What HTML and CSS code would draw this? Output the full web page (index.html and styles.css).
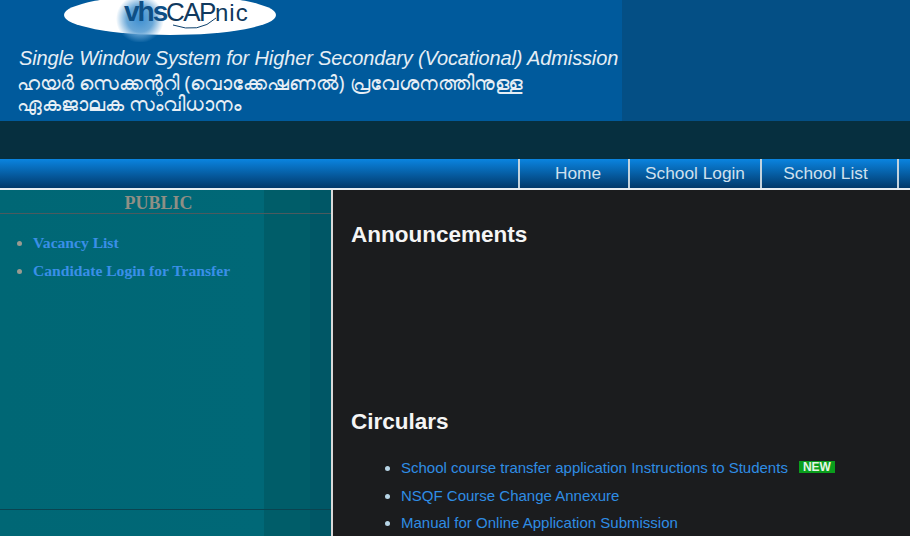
FILE: index.html
```html
<!DOCTYPE html>
<html lang="en">
<head>
    <meta charset="UTF-8">
    <meta name="viewport" content="width=device-width, initial-scale=1.0">
    <title>Single Window System for Higher Secondary (Vocational) Admission</title>
    <link rel="stylesheet" href="styles.css">
</head>
<body>
    <header class="header">
        <div class="banner">
            <svg class="logo" width="240" height="42" viewBox="0 0 240 42">
                <defs>
                    <radialGradient id="glow">
                        <stop offset="0" stop-color="#3f8fd0"/>
                        <stop offset="0.55" stop-color="#6aa8d8"/>
                        <stop offset="1" stop-color="#6aa8d8" stop-opacity="0"/>
                    </radialGradient>
                </defs>
                <ellipse cx="106" cy="15" rx="106" ry="20" fill="#fff"/>
                <circle cx="76" cy="19" r="24" fill="url(#glow)"/>
                <text class="logo-vhs" x="60" y="21">vhs</text>
                <text class="logo-cap" x="102" y="21">CAP</text>
                <text class="logo-nic" x="151" y="21">nic</text>
                <path d="M109 25 Q135 34 152 18" fill="none" stroke="#0b3f6b" stroke-width="1"/>
            </svg>
            <div class="title-en">Single Window System for Higher Secondary (Vocational) Admission</div>
            <div class="title-ml">ഹയർ സെക്കന്ററി (വൊക്കേഷണൽ) പ്രവേശനത്തിനുള്ള<br>ഏകജാലക സംവിധാനം</div>
        </div>
    </header>
    <div class="band"></div>
    <nav class="nav">
        <a href="#" class="nav-home">Home</a>
        <a href="#" class="nav-login">School Login</a>
        <a href="#" class="nav-list">School List</a>
    </nav>
    <div class="main">
        <aside class="sidebar">
            <h3>PUBLIC</h3>
            <ul>
                <li><a href="#">Vacancy List</a></li>
                <li><a href="#">Candidate Login for Transfer</a></li>
            </ul>
            <div class="sidebar-rule"></div>
        </aside>
        <section class="content">
            <h2 class="announce">Announcements</h2>
            <h2>Circulars</h2>
            <ul>
                <li><a href="#">School course transfer application Instructions to Students</a><span class="new">NEW</span></li>
                <li><a href="#">NSQF Course Change Annexure</a></li>
                <li><a href="#">Manual for Online Application Submission</a></li>
            </ul>
        </section>
    </div>
</body>
</html>
```

FILE: styles.css
```css
html, body {
    height: 100%;
}
body {
    margin: 0;
    font-family: "Liberation Sans", Arial, sans-serif;
    background-color: #1b1c1e;
    overflow: hidden;
}
.header {
    height: 121px;
    background-color: #044f85;
}
.banner {
    width: 622px;
    height: 121px;
    background-color: #005a9c;
    overflow: hidden;
    color: #e6eef5;
}
.logo {
    display: block;
    margin-left: 64px;
}
.logo-vhs {
    font: bold 28px "Liberation Sans", sans-serif;
    fill: #0e4f86;
    letter-spacing: -2px;
}
.logo-cap {
    font: 26px "Liberation Sans", sans-serif;
    fill: #10395e;
    letter-spacing: -1.5px;
}
.logo-nic {
    font: 24px "Liberation Sans", sans-serif;
    fill: #10395e;
    letter-spacing: 1px;
}
.title-en {
    margin: 3px 0 0 19px;
    font-size: 20px;
    font-style: italic;
    line-height: 26px;
    white-space: nowrap;
    letter-spacing: -0.13px;
}
.title-ml {
    margin: 1px 0 0 17px;
    font-family: "Noto Sans", "DejaVu Sans", sans-serif;
    font-size: 20px;
    line-height: 21px;
    white-space: nowrap;
}
.band {
    height: 38px;
    background-color: #062f3f;
}
.nav {
    display: flex;
    justify-content: flex-end;
    height: 29px;
    padding-right: 11px;
    background: linear-gradient(#0a84e0, #02396a);
    border-bottom: 2px solid #e8eef2;
}
.nav a {
    display: flex;
    align-items: center;
    justify-content: center;
    box-sizing: border-box;
    height: 29px;
    border-left: 2px solid #c3d3de;
    color: #cfe0ee;
    font-size: 17.3px;
    text-decoration: none;
}
.nav-home {
    width: 110px;
    padding-left: 8px;
}
.nav-login {
    width: 132px;
}
.nav-list {
    width: 139px;
    padding-right: 8px;
    border-right: 2px solid #c3d3de;
}
.main {
    display: flex;
    height: 346px;
}
.sidebar {
    position: relative;
    box-sizing: border-box;
    width: 333px;
    background: linear-gradient(to right, #006775 0, #006877 264px, #005d69 264px, #005d69 310px, #005766 310px);
    border-right: 2px solid #d9d9d9;
    font-family: "Liberation Serif", serif;
}
.sidebar h3 {
    margin: 0;
    height: 23px;
    padding-right: 14px;
    border-bottom: 1px solid #4c5a5e;
    color: #8f8f85;
    font-size: 18px;
    line-height: 26px;
    text-align: center;
}
.sidebar ul {
    margin: 15px 0 0;
    padding: 0 0 0 33px;
    color: #9a9a90;
}
.sidebar li {
    height: 28px;
    line-height: 28px;
    font-size: 15.6px;
    font-weight: bold;
}
.sidebar a {
    color: #3a8fe8;
    text-decoration: none;
}
.sidebar-rule {
    position: absolute;
    left: 0;
    right: 0;
    top: 319px;
    border-top: 1px solid #0a4450;
}
.content {
    flex: 1;
    padding: 0 0 0 18px;
}
.content h2 {
    margin: 0;
    color: #f5f5f5;
    font-size: 22.5px;
    line-height: 28px;
}
.content .announce {
    margin: 31px 0 159px;
}
.content ul {
    margin: 18px 0 0;
    padding: 0 0 0 50px;
    color: #b7d4e6;
}
.content li {
    height: 27.5px;
    line-height: 27.5px;
    font-size: 15px;
    white-space: nowrap;
}
.content a {
    color: #2f8de4;
    text-decoration: none;
}
.new {
    display: inline-block;
    margin-left: 11px;
    padding: 0 4px;
    height: 12px;
    line-height: 12px;
    background-color: #0a9e1c;
    color: #e4f5e4;
    font-size: 12px;
    font-weight: bold;
    vertical-align: 2px;
}
```
